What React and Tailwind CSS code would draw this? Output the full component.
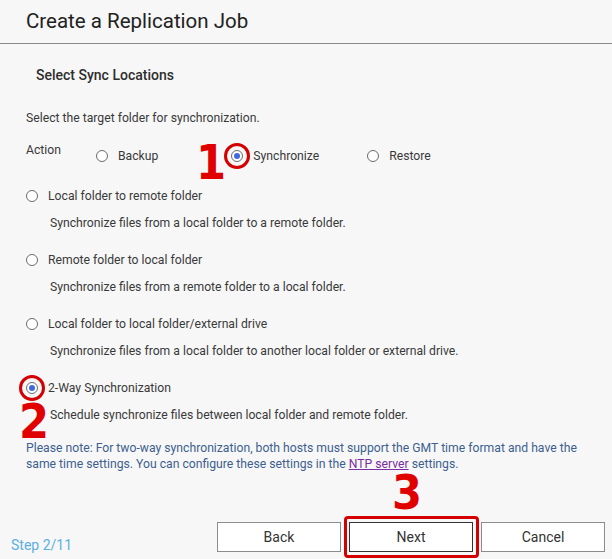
import React from "react";

function Radio({ checked }) {
  return (
    <span className="relative inline-flex h-[12px] w-[12px] shrink-0 items-center justify-center rounded-full border border-[#6b6b6b] bg-white">
      {checked && <span className="h-[6px] w-[6px] rounded-full bg-[#4169e1]" />}
    </span>
  );
}

function Option({ label, desc, checked, children }) {
  return (
    <div className="relative">
      <div className="flex h-[16px] items-center">
        <span className="relative ml-[26px] flex">
          <Radio checked={checked} />
          {children}
        </span>
        <span className="ml-[10px]">{label}</span>
      </div>
      <div className="ml-[50px] mt-[11px] h-[16px] leading-[16px]">{desc}</div>
    </div>
  );
}

function RedNum({ n, className }) {
  return (
    <span
      className={
        "absolute text-[48px] font-black leading-none text-[#e00000] [font-family:'DejaVu_Sans_Condensed','DejaVu_Sans',sans-serif] " +
        className
      }
    >
      {n}
    </span>
  );
}

export default function App() {
  return (
    <div className="relative h-[559px] w-[612px] overflow-hidden bg-[#f7f7f7] text-[12.2px] text-[#3a3a3a] [font-family:Roboto,'Liberation_Sans',sans-serif]">
      <div className="flex h-[44px] items-center border-b border-[#8a8a8a] pl-[26px] pb-[1px] text-[20.5px] text-[#222]">
        Create a Replication Job
      </div>

      <div className="ml-[36px] mt-[22px] h-[18px] text-[14px] font-medium leading-[18px] text-[#2e2e2e]">
        Select Sync Locations
      </div>

      <div className="ml-[26px] mt-[26px] h-[16px] leading-[16px]">
        Select the target folder for synchronization.
      </div>

      <div className="relative mt-[16px] flex h-[22px] items-start pl-[26px]">
        <span className="leading-[16px]">Action</span>
        <div className="ml-[35px] mt-[6px] flex h-[16px] items-center">
          <Radio />
          <span className="ml-[10px]">Backup</span>
        </div>
        <div className="ml-[73px] mt-[6px] flex h-[16px] items-center">
          <span className="relative flex">
            <Radio checked />
            <span className="absolute left-[-7px] top-[-7px] h-[26px] w-[26px] rounded-full border-[3px] border-[#d40000]" />
          </span>
          <span className="ml-[10px]">Synchronize</span>
        </div>
        <div className="ml-[48px] mt-[6px] flex h-[16px] items-center">
          <Radio />
          <span className="ml-[10px]">Restore</span>
        </div>
        <RedNum n="1" className="left-[196px] top-[-4px]" />
      </div>

      <div className="mt-[24px] flex flex-col gap-[21px]">
        <Option
          label="Local folder to remote folder"
          desc="Synchronize files from a local folder to a remote folder."
        />
        <Option
          label="Remote folder to local folder"
          desc="Synchronize files from a remote folder to a local folder."
        />
        <Option
          label="Local folder to local folder/external drive"
          desc="Synchronize files from a local folder to another local folder or external drive."
        />
        <Option
          label="2-Way Synchronization"
          desc="Schedule synchronize files between local folder and remote folder."
          checked
        >
          <span className="absolute left-[-7px] top-[-7px] h-[26px] w-[26px] rounded-full border-[3px] border-[#d40000]" />
          <RedNum n="2" className="left-[-7px] top-[15px]" />
        </Option>
      </div>

      <div className="ml-[26px] mr-[20px] mt-[17px] leading-[16px] text-[#3e5f8f]">
        Please note: For two-way synchronization, both hosts must support the GMT time format and have the same time settings. You can configure these settings in the <span className="text-[#7a2fa0] underline">NTP server</span> settings.
      </div>

      <div className="absolute bottom-0 left-0 right-0 flex h-[48px] items-start">
        <span className="ml-[11px] mt-[25px] text-[14px] leading-[18px] text-[#5bb0e0]">Step 2/11</span>
        <div className="ml-auto mr-[7px] mt-[11px] flex gap-[8px]">
          <button className="h-[30px] w-[124px] border border-[#8c8c8c] bg-white text-[14px] text-[#333]">Back</button>
          <span className="relative flex">
            <button className="h-[30px] w-[124px] border border-[#333] bg-white text-[14px] text-[#333]">Next</button>
            <span className="absolute left-[-5px] top-[-6px] h-[42px] w-[135px] rounded-[4px] border-[3px] border-[#d40000]" />
            <RedNum n="3" className="left-[43px] top-[-54px]" />
          </span>
          <button className="h-[30px] w-[124px] border border-[#8c8c8c] bg-white text-[14px] text-[#333]">Cancel</button>
        </div>
      </div>
    </div>
  );
}
